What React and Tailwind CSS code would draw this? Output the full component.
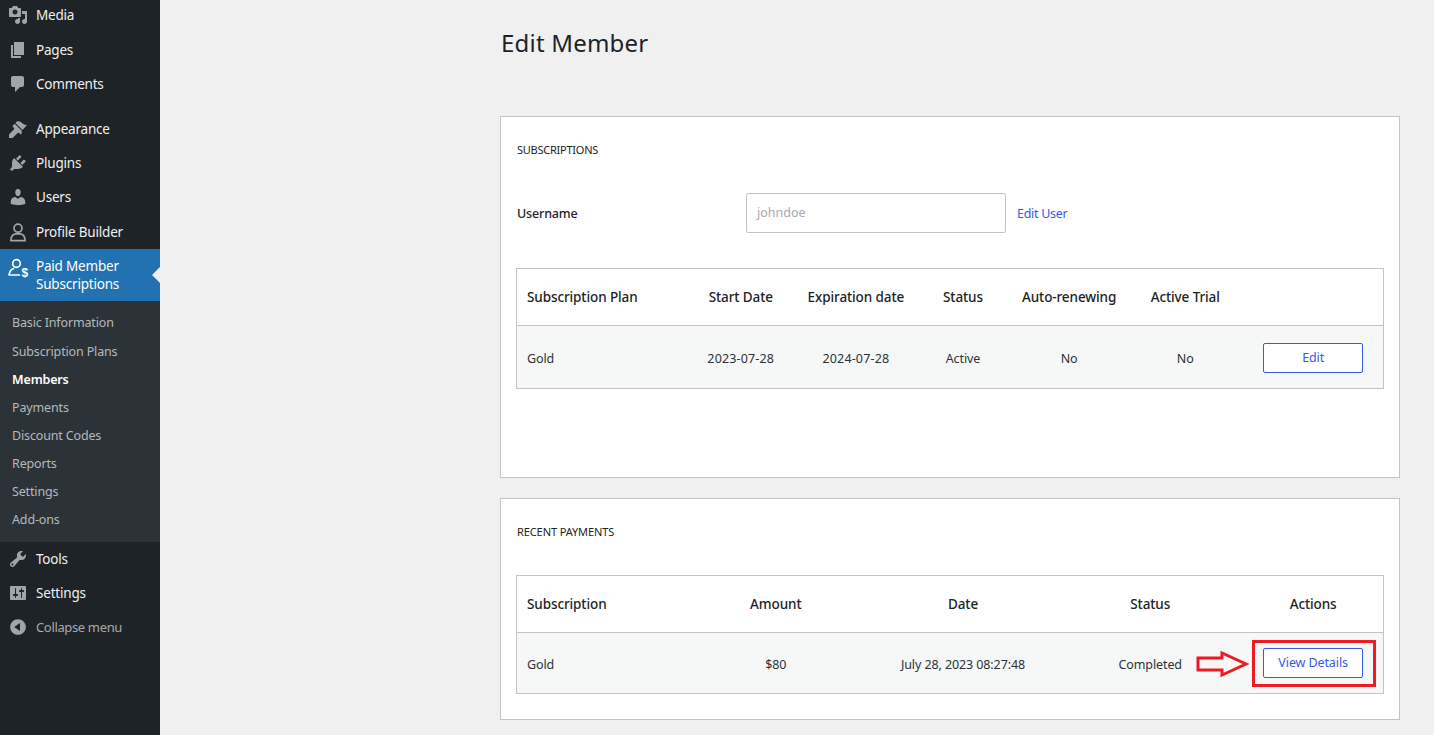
const seg = "font-['Noto_Sans',sans-serif]";

const icons = {
  media: "M13 11V4c0-.55-.45-1-1-1h-1.67L9 1H5L3.67 3H2c-.55 0-1 .45-1 1v7c0 .55.45 1 1 1h10c.55 0 1-.45 1-1zM7 4.5c1.38 0 2.5 1.12 2.5 2.5S8.38 9.5 7 9.5 4.5 8.38 4.5 7 5.62 4.5 7 4.5zM14 6h5v10.5c0 1.38-1.12 2.5-2.5 2.5S14 17.88 14 16.5s1.12-2.5 2.5-2.5c.17 0 .34.02.5.05V9h-3V6zm-4 8.05V13h2v3.5c0 1.38-1.12 2.5-2.5 2.5S7 17.88 7 16.5 8.12 14 9.5 14c.17 0 .34.02.5.05z",
  pages: "M6 15V2h10v13H6zm-1 1h8v2H3V5h2v11z",
  comments: "M5 2h9c1.1 0 2 .9 2 2v7c0 1.1-.9 2-2 2h-2l-5 5v-5H5c-1.1 0-2-.9-2-2V4c0-1.1.9-2 2-2z",
  appearance: "M14.48 11.06L7.41 3.99l1.5-1.5c.5-.56 2.3-.47 3.51.32 1.21.8 1.43 1.28 2.91 2.1 1.18.64 2.45 1.26 3.67 1.1zM13.77 11.77L6.7 4.7 4.93 6.47c-.39.39-.39 1.02 0 1.41l1.06 1.06c.39.39.39 1.03 0 1.42L1 15.4V19h3.6l5.04-5c.39-.39 1.03-.39 1.42 0l1.06 1.06c.39.39 1.02.39 1.41 0z",
  plugins: "M13.11 4.36L9.87 7.6 8 5.73l3.24-3.24c.35-.34 1.05-.2 1.56.32.52.51.66 1.21.31 1.55zm-8 1.77l.91-1.12 9.01 9.01-1.19.84c-.71.71-2.63 1.16-3.82 1.16H6.14L4.9 17.26c-.59.59-1.54.59-2.12 0-.59-.58-.59-1.53 0-2.12l1.24-1.24v-3.88c0-1.13.4-3.19 1.09-3.89zm7.26 3.97l3.24-3.24c.34-.35 1.04-.21 1.55.31.52.51.66 1.21.31 1.55l-3.24 3.25z",
  users: "M10 9.25c-2.27 0-2.73-3.44-2.73-3.44C7 4.02 7.82 2 9.97 2c2.16 0 2.98 2.02 2.71 3.81 0 0-.41 3.44-2.68 3.44zm0 2.57L12.72 10c2.39 0 4.52 2.33 4.52 4.53v2.49s-3.65 1.13-7.24 1.13c-3.65 0-7.24-1.13-7.24-1.13v-2.49c0-2.25 1.94-4.48 4.47-4.48z",
  tools: "M16.68 9.77c-1.34 1.34-3.3 1.67-4.95.99l-5.41 6.52c-.99.99-2.59.99-3.58 0s-.99-2.59 0-3.57l6.52-5.42c-.68-1.65-.35-3.61.99-4.95 1.28-1.28 3.12-1.62 4.72-1.06l-2.89 2.89 2.82 2.82 2.86-2.87c.53 1.58.18 3.39-1.08 4.65zM3.81 16.21c.4.39 1.04.39 1.43 0 .4-.4.4-1.04 0-1.43-.39-.4-1.03-.4-1.43 0-.39.39-.39 1.03 0 1.43z",
  settings: "M18 16V4c0-.55-.45-1-1-1H3c-.55 0-1 .45-1 1v12c0 .55.45 1 1 1h14c.55 0 1-.45 1-1zM8 11h1c.55 0 1 .45 1 1s-.45 1-1 1H8v1.5c0 .28-.22.5-.5.5s-.5-.22-.5-.5V13H6c-.55 0-1-.45-1-1s.45-1 1-1h1V5.5c0-.28.22-.5.5-.5s.5.22.5.5V11zm5-2h-1c-.55 0-1-.45-1-1s.45-1 1-1h1V5.5c0-.28.22-.5.5-.5s.5.22.5.5V7h1c.55 0 1 .45 1 1s-.45 1-1 1h-1v5.5c0 .28-.22.5-.5.5s-.5-.22-.5-.5V9z",
  collapse: "M10 2.16c4.33 0 7.84 3.51 7.84 7.84s-3.51 7.84-7.84 7.84S2.16 14.33 2.16 10 5.71 2.16 10 2.16zm2 11.72V6.12L6.18 9.97z",
};

function Dash({ name }) {
  return (
    <svg viewBox="0 0 20 20" className="h-5 w-5 shrink-0 fill-[#a0a5aa]">
      <path d={icons[name]} fillRule="evenodd" />
    </svg>
  );
}

function MenuItem({ icon, label, className = "h-[34px]", textClass = "text-[13.5px] tracking-[-0.2px] text-[#f0f0f1]" }) {
  return (
    <div className={`flex items-center pl-[8px] ${className}`}>
      <Dash name={icon} />
      <span className={`ml-[8px] ${textClass}`}>{label}</span>
    </div>
  );
}

function Sidebar() {
  const sub = ["Basic Information", "Subscription Plans", "Members", "Payments", "Discount Codes", "Reports", "Settings", "Add-ons"];
  return (
    <aside className="w-[160px] shrink-0 self-stretch bg-[#1d2327]">
      <MenuItem icon="media" label="Media" className="h-[33px] pb-[3px]" />
      <MenuItem icon="pages" label="Pages" />
      <MenuItem icon="comments" label="Comments" />
      <div className="h-[11px]" />
      <MenuItem icon="appearance" label="Appearance" />
      <MenuItem icon="plugins" label="Plugins" />
      <MenuItem icon="users" label="Users" />
      <div className="flex h-[35px] items-center pl-[8px] pt-[1px]">
        <svg viewBox="0 0 20 20" className="h-5 w-5 shrink-0 fill-none stroke-[#a0a5aa] stroke-[1.7]">
          <circle cx="10" cy="6.2" r="4" />
          <path d="M2.8 18.6c0-4.4 2.6-6.6 4.6-6.8h5.2c2 .2 4.6 2.4 4.6 6.8z" strokeLinejoin="round" />
        </svg>
        <span className="ml-[8px] text-[13.5px] tracking-[-0.2px] text-[#f0f0f1]">Profile Builder</span>
      </div>
      <div className="relative flex h-[52px] bg-[#2271b1] pl-[8px] pt-[8px]">
        <svg viewBox="0 0 21 20" className="mt-[1px] h-5 w-[21px] shrink-0 fill-none stroke-white stroke-[1.7]">
          <circle cx="8.5" cy="5.5" r="3.8" />
          <path d="M5.5 10.5C3 11.5 1.5 14 1 17h10.5" strokeLinecap="round" strokeLinejoin="round" />
          <text x="13.5" y="18.5" fill="#fff" stroke="none" fontSize="12" fontWeight="700" fontFamily="Liberation Sans">$</text>
        </svg>
        <span className="ml-[7px] text-[13.5px] leading-[18px] tracking-[-0.2px] text-white">Paid Member<br />Subscriptions</span>
        <span className="absolute right-0 top-[18px] border-y-[8px] border-r-[8px] border-y-transparent border-r-[#f0f0f1]" />
      </div>
      <div className="flex flex-col bg-[#2c3338] pb-[7.2px] pt-[8.8px]">
        {sub.map((s) => (
          <div key={s} className={`flex h-[28.13px] items-center pl-[12px] text-[12.5px] tracking-[-0.15px] ${s === "Members" ? "font-semibold text-white" : "text-[#b4b9be]"}`}>{s}</div>
        ))}
      </div>
      <MenuItem icon="tools" label="Tools" />
      <MenuItem icon="settings" label="Settings" />
      <MenuItem icon="collapse" label="Collapse menu" textClass="pt-[2px] text-[13px] tracking-[-0.35px] text-[#a7aaad]" />
    </aside>
  );
}

function Btn({ children }) {
  return (
    <button className="h-[30px] w-[100px] rounded-[2px] border border-[#3858e9] bg-white pt-[1px] text-[12.5px] tracking-[-0.1px] text-[#3858e9]">{children}</button>
  );
}

const thMain = "text-[13.5px] font-medium tracking-[-0.1px] text-[#1d2327]";
const tdMain = "pt-[5px] text-[12.5px] tracking-[-0.1px] text-[#2c3338]";

function SubscriptionsTable() {
  const heads = ["Start Date", "Expiration date", "Status", "Auto-renewing", "Active Trial"];
  const vals = ["2023-07-28", "2024-07-28", "Active", "No", "No"];
  return (
    <table className="w-[868px] table-fixed border border-[#c3c4c7]">
      <colgroup>
        <col className="w-[166px]" /><col className="w-[116px]" /><col className="w-[114px]" /><col className="w-[100px]" /><col className="w-[112px]" /><col className="w-[120px]" /><col className="w-[138px]" />
      </colgroup>
      <thead>
        <tr className="h-[57px] border-b border-[#c3c4c7] bg-white">
          <th className={`pl-[10px] text-left ${thMain}`}>Subscription Plan</th>
          {heads.map((h) => <th key={h} className={`text-center ${thMain}`}>{h}</th>)}
          <th />
        </tr>
      </thead>
      <tbody>
        <tr className="h-[63px] bg-[#f6f7f7]">
          <td className={`pl-[10px] ${tdMain}`}>Gold</td>
          {vals.map((v, i) => <td key={i} className={`text-center ${tdMain} ${i < 2 ? "tracking-[0.15px]" : ""}`}>{v}</td>)}
          <td className="pr-[2px] pt-[2px] text-center"><Btn>Edit</Btn></td>
        </tr>
      </tbody>
    </table>
  );
}

function PaymentsTable() {
  const heads = ["Amount", "Date", "Status", "Actions"];
  return (
    <table className="w-[868px] table-fixed border border-[#c3c4c7]">
      <colgroup>
        <col className="w-[166px]" /><col className="w-[186px]" /><col className="w-[188px]" /><col className="w-[186px]" /><col className="w-[140px]" />
      </colgroup>
      <thead>
        <tr className="h-[57px] border-b border-[#c3c4c7] bg-white">
          <th className={`pl-[10px] text-left ${thMain}`}>Subscription</th>
          {heads.map((h) => <th key={h} className={`text-center ${thMain}`}>{h}</th>)}
        </tr>
      </thead>
      <tbody>
        <tr className="h-[61px] bg-[#f6f7f7]">
          <td className={`pl-[10px] ${tdMain}`}>Gold</td>
          <td className={`text-center ${tdMain}`}>$80</td>
          <td className={`text-center ${tdMain}`}>July 28, 2023 08:27:48</td>
          <td className={`relative text-center ${tdMain}`}>
            Completed
            <svg viewBox="0 0 54 28" className="absolute left-[139px] top-[17px] h-[28px] w-[54px] fill-none stroke-[#ed1c24] stroke-[3]">
              <path d="M2 8h24V3l24 11-24 11v-5H2z" />
            </svg>
          </td>
          <td className="relative text-center">
            <Btn>View Details</Btn>
            <div className="pointer-events-none absolute left-[9px] top-[7px] h-[47px] w-[124px] border-[3px] border-[#ed1c24]" />
          </td>
        </tr>
      </tbody>
    </table>
  );
}

export default function App() {
  return (
    <div className={`flex h-[735px] w-[1434px] overflow-hidden bg-[#f0f0f1] ${seg}`}>
      <Sidebar />
      <main className="flex flex-1 flex-col pl-[340px]">
        <h1 className="mt-[24px] h-[38px] pl-[1px] text-[24px] leading-[38px] tracking-[0.2px] text-[#1d2327]">Edit Member</h1>
        <section className="mt-[54px] h-[362px] w-[900px] border border-[#c3c4c7] bg-white px-[15px] pt-[24px]">
          <h2 className="pl-[1px] text-[11px] leading-[18px] tracking-[-0.25px] text-[#1d2327]">SUBSCRIPTIONS</h2>
          <div className="mt-[34px] flex h-[40px] items-center">
            <span className="w-[230px] pl-[1px] pt-[3px] text-[12.5px] font-medium tracking-[-0.15px] text-[#1d2327]">Username</span>
            <div className="flex h-[40px] w-[260px] items-center rounded-[2px] border border-[#c3c4c7] bg-white pl-[10px] pt-[1px] text-[12.5px] text-[#a7aaad]">johndoe</div>
            <span className="ml-[11px] pt-[3px] text-[12.5px] tracking-[-0.3px] text-[#3858e9]">Edit User</span>
          </div>
          <div className="mt-[35px]"><SubscriptionsTable /></div>
        </section>
        <section className="mt-[20px] h-[222px] w-[900px] border border-[#c3c4c7] bg-white px-[15px] pt-[24px]">
          <h2 className="pl-[1px] text-[11px] leading-[18px] tracking-[-0.1px] text-[#1d2327]">RECENT PAYMENTS</h2>
          <div className="mt-[34px]"><PaymentsTable /></div>
        </section>
      </main>
    </div>
  );
}
